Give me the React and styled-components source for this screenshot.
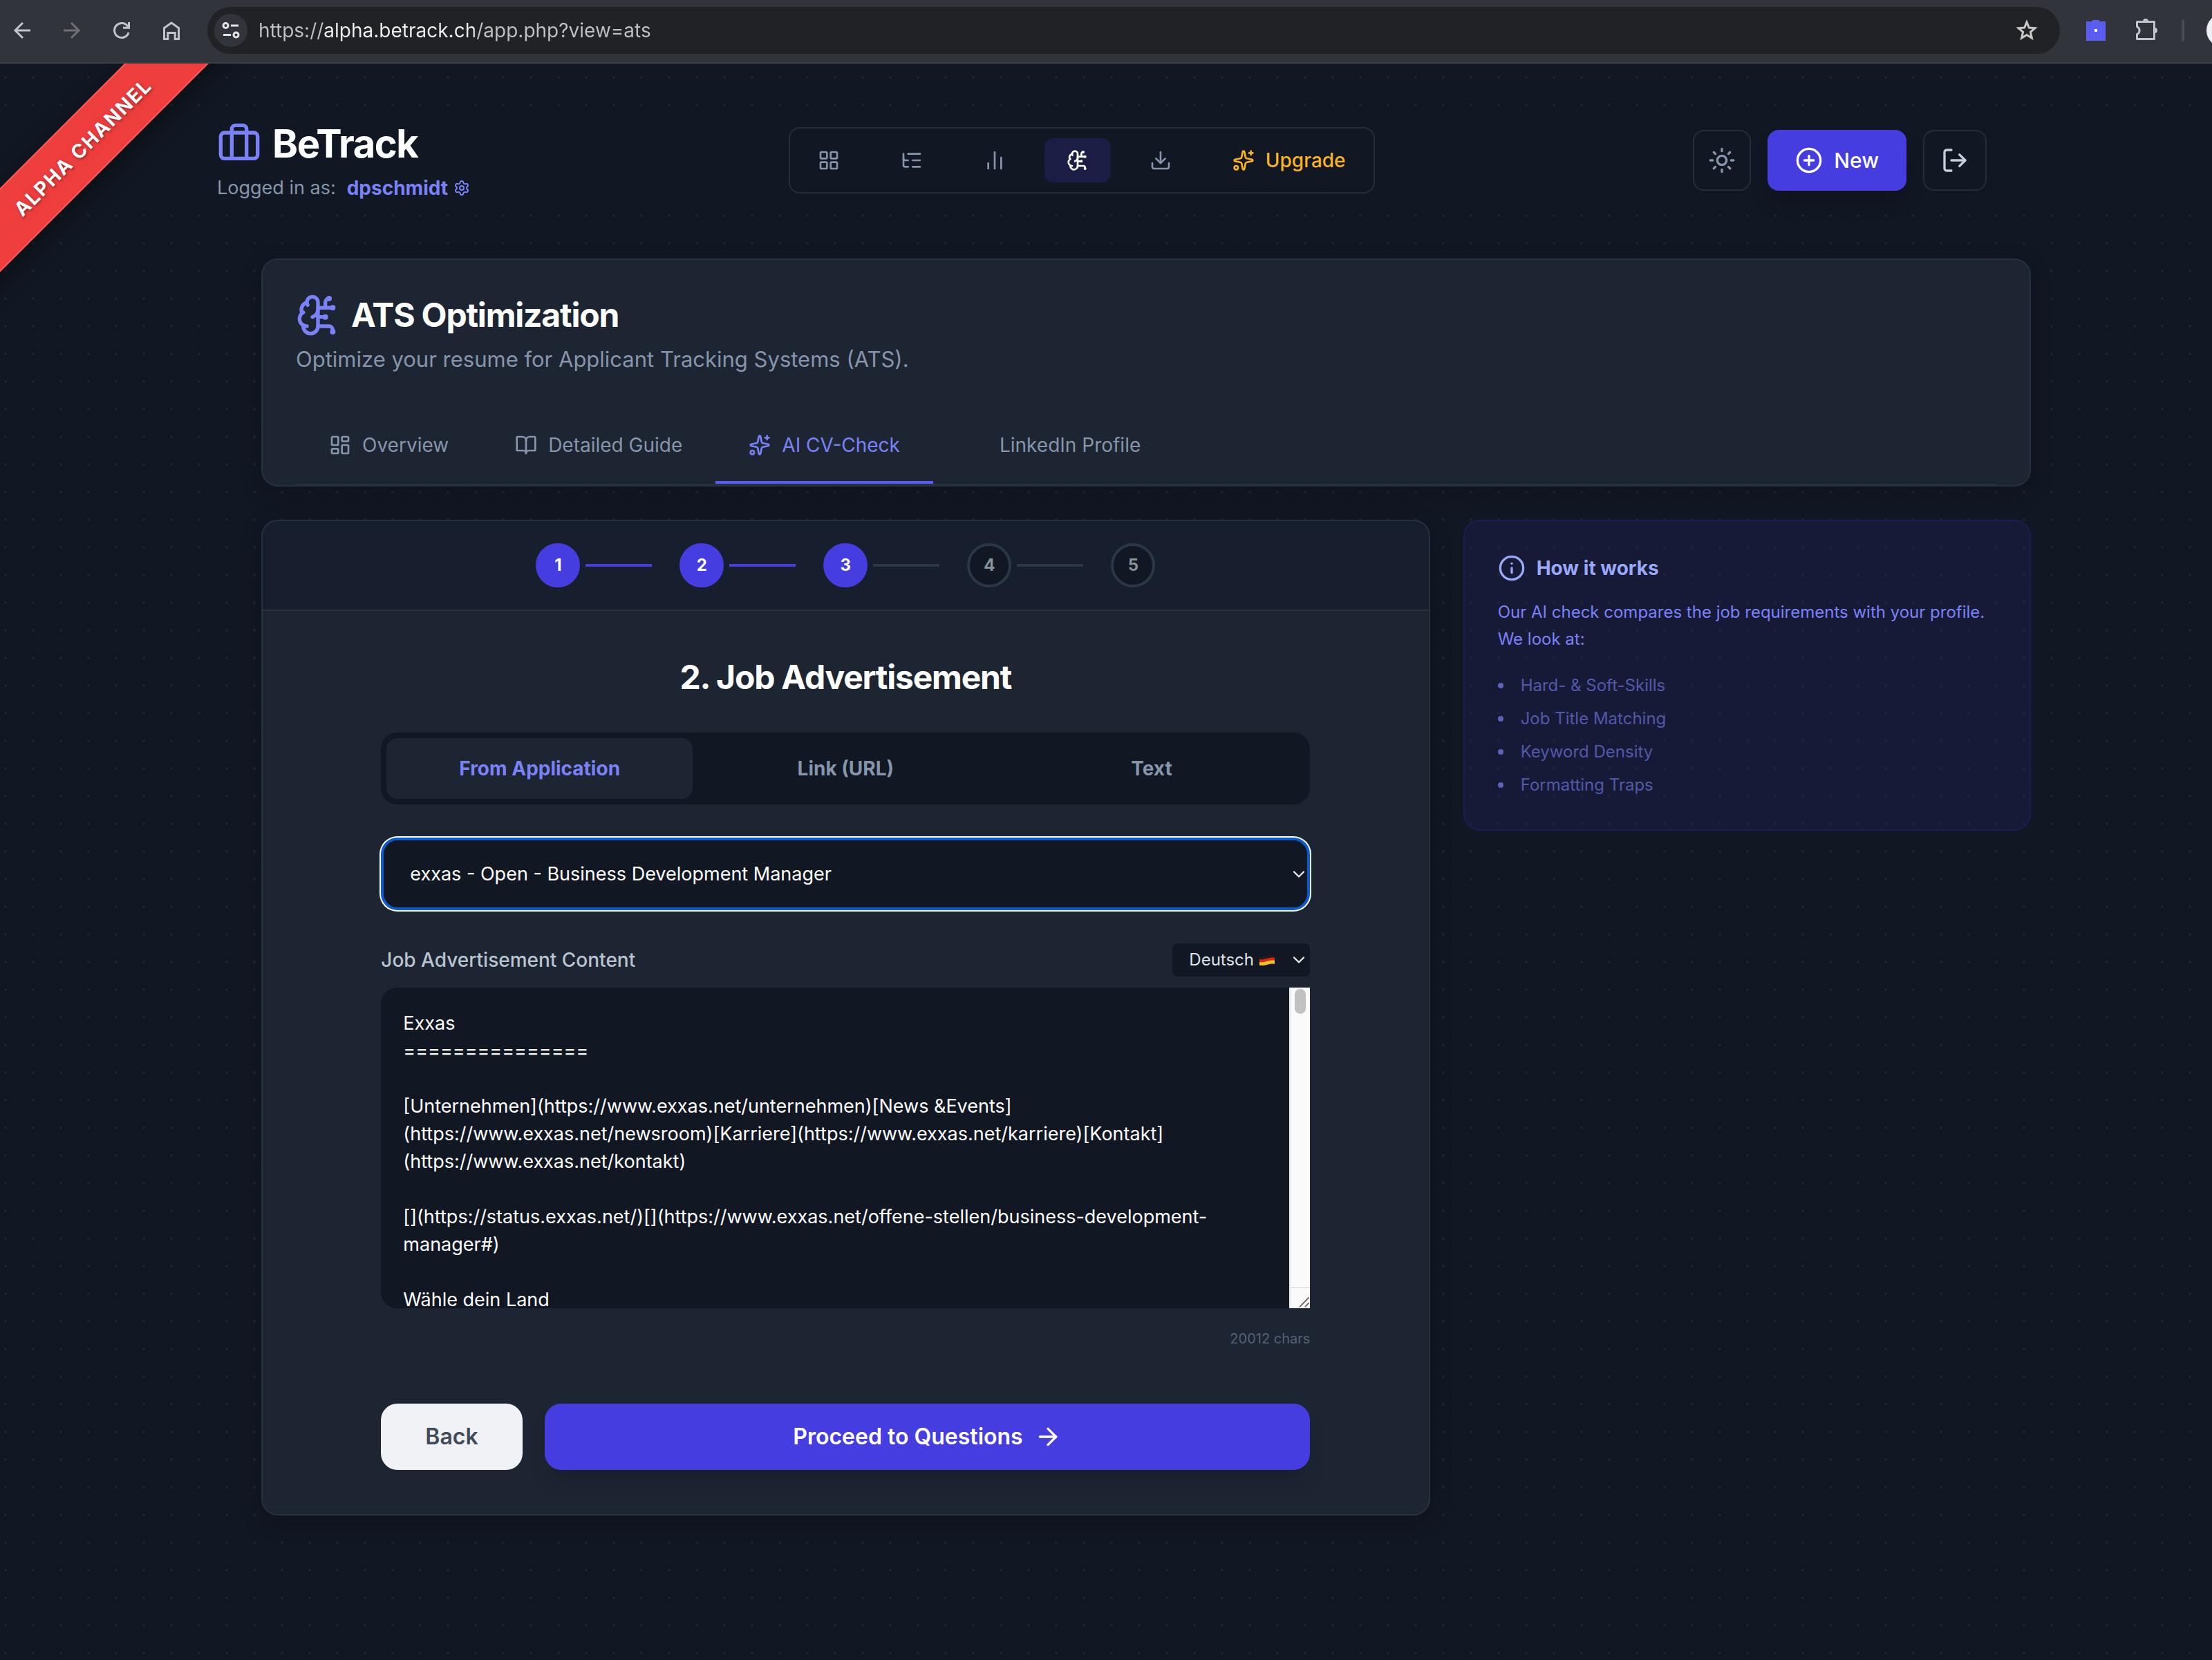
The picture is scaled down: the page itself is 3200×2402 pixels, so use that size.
import React, { useState } from "react";
import styled, { createGlobalStyle } from "styled-components";
import {
  ArrowRight,
  BookOpen,
  BrainCircuit,
  Briefcase,
  ChartNoAxesColumn,
  ChevronDown,
  CirclePlus,
  Download,
  Info,
  LayoutDashboard,
  LayoutGrid,
  ListTree,
  LogOut,
  Settings,
  Sparkles,
  Sun,
} from "lucide-react";

const GlobalStyle = createGlobalStyle`
  *,
  *::before,
  *::after {
    box-sizing: border-box;
  }

  body {
    margin: 0;
    background: #111723;
    font-family: Inter, "Liberation Sans", sans-serif;
    font-size: 28px;
    line-height: 40px;
    color: #ffffff;
  }

  button,
  input,
  select,
  textarea {
    font-family: inherit;
    font-size: inherit;
    line-height: inherit;
    color: inherit;
    margin: 0;
  }

  button {
    cursor: pointer;
  }

  h1, h2, h3, p, ul {
    margin: 0;
  }
`;

/* ---------- browser bar ---------- */

const BrowserBar = styled.div`
  display: flex;
  align-items: center;
  height: 92px;
  padding: 0 0 2px 8px;
  background: #32343b;
  border-bottom: 2px solid #3e3f44;
  overflow: hidden;
`;

const BrowserButton = styled.button`
  flex: none;
  display: flex;
  align-items: center;
  justify-content: center;
  width: 48px;
  height: 48px;
  margin-right: 24px;
  padding: 0;
  border: none;
  background: none;
  color: ${(props) => (props.$muted ? "#6f7074" : "#c0c3d0")};
`;

const AddressBar = styled.div`
  flex: 1;
  display: flex;
  align-items: center;
  height: 68px;
  margin-left: 4px;
  padding: 0 24px 0 10px;
  border-radius: 34px;
  background: #212226;
`;

const SiteInfo = styled.button`
  display: flex;
  align-items: center;
  justify-content: center;
  width: 48px;
  height: 48px;
  padding: 0;
  border: none;
  border-radius: 50%;
  background: #32343b;
  color: #e3e3e3;
`;

const AddressInput = styled.input`
  flex: 1;
  height: 40px;
  margin-left: 16px;
  padding: 0;
  border: none;
  outline: none;
  color: #c0c1c3;
  background: linear-gradient(to right, #c0c1c3 93px, #f0f0f0 93px, #f0f0f0 312px, #c0c1c3 312px);
  background-clip: text;
  -webkit-background-clip: text;
  -webkit-text-fill-color: transparent;
`;

const StarButton = styled(BrowserButton)`
  margin-right: 0;
  color: #c9c7c5;
`;

const Extensions = styled.div`
  flex: none;
  display: flex;
  align-items: center;
  width: 220px;
  padding-left: 28px;
`;

const BarSeparator = styled.span`
  flex: none;
  width: 4px;
  height: 32px;
  margin: 0 32px 0 4px;
  border-radius: 2px;
  background: #4a4c54;
`;

const Avatar = styled.span`
  flex: none;
  width: 48px;
  height: 48px;
  border-radius: 50%;
  background: #eff0f4;
`;

/* ---------- page ---------- */

const Page = styled.div`
  position: relative;
  min-height: calc(100vh - 92px);
  padding: 64px 0 128px;
  overflow: hidden;
  background-color: #111723;
  background-image: radial-gradient(circle, #1f2733 2px, transparent 2px);
  background-size: 40px 40px;
  background-position: -12px 0;
`;

const Ribbon = styled.div`
  position: absolute;
  top: 78px;
  left: -130px;
  display: flex;
  align-items: center;
  justify-content: center;
  width: 500px;
  height: 86px;
  transform: rotate(-45deg);
  background: #ed3d3d;
  border: 2px solid #f25c5c;
  box-shadow: 0 8px 30px rgba(0, 0, 0, 0.45);
  font-weight: 700;
  letter-spacing: 2px;
  text-shadow: 0 2px 4px rgba(0, 0, 0, 0.4);
`;

const Header = styled.header`
  display: flex;
  align-items: center;
  justify-content: space-between;
  padding: 16px 326px 16px 314px;
  background: #111723;
`;

const Brand = styled.div`
  display: flex;
  flex-direction: column;
  gap: 8px;
`;

const BrandName = styled.h1`
  display: flex;
  align-items: center;
  gap: 16px;
  font-size: 56px;
  line-height: 72px;
  font-weight: 700;
  letter-spacing: -0.025em;

  svg {
    color: #7a82f8;
  }
`;

const UserLine = styled.div`
  display: flex;
  align-items: center;
  gap: 16px;
  font-size: 27px;
  color: #8695ab;
`;

const UserLink = styled.a`
  display: flex;
  align-items: center;
  gap: 8px;
  color: #7a82f8;
  font-size: 28px;
  font-weight: 700;
  text-decoration: none;
`;

const MainNav = styled.nav`
  display: flex;
  gap: 24px;
  padding: 14px 8px;
  border: 2px solid #262d39;
  border-radius: 16px;
`;

const NavButton = styled.button`
  display: flex;
  align-items: center;
  gap: 16px;
  height: 64px;
  padding: 0 32px;
  border: none;
  border-radius: 12px;
  font-weight: 500;
  background: ${(props) => (props.$active ? "#1c1d45" : "none")};
  color: ${(props) => (props.$active ? "#ffffff" : props.$gold ? "#fbb324" : "#8695ab")};
`;

const Actions = styled.div`
  display: flex;
  gap: 24px;
`;

const OutlineButton = styled.button`
  display: flex;
  align-items: center;
  height: 88px;
  padding: 0 ${(props) => props.$pad};
  border: 2px solid #262d39;
  border-radius: 16px;
  background: none;
  color: ${(props) => props.$color};
`;

const NewButton = styled.button`
  display: flex;
  align-items: center;
  gap: 16px;
  height: 88px;
  padding: 0 40px;
  border: none;
  border-radius: 16px;
  background: #463de0;
  box-shadow: 0 20px 30px -6px rgba(0, 0, 0, 0.2);
  font-size: 30px;
  font-weight: 500;
`;

const Main = styled.main`
  display: flex;
  flex-direction: column;
  gap: 48px;
  padding: 66px 262px 0 378px;
`;

const Card = styled.section`
  border: 2px solid #27303d;
  border-radius: 24px;
  background: #1d2533;
  box-shadow: 0 8px 32px rgba(0, 0, 0, 0.2);
  overflow: hidden;
`;

const IntroCard = styled(Card)`
  padding: 48px 48px 0;
`;

const IntroTitle = styled.h2`
  display: flex;
  align-items: center;
  gap: 16px;
  font-size: 48px;
  line-height: 64px;
  font-weight: 700;
  letter-spacing: -0.025em;

  svg {
    color: #7a82f8;
  }
`;

const IntroText = styled.p`
  margin-top: 8px;
  font-size: 31px;
  line-height: 48px;
  color: #8695ab;
`;

const Tabs = styled.div`
  display: flex;
  margin-top: 48px;
  border-bottom: 2px solid #27303d;
`;

const Tab = styled.button`
  display: flex;
  align-items: center;
  gap: 16px;
  padding: 32px 48px;
  border: none;
  border-bottom: 4px solid ${(props) => (props.$active ? "#585cf0" : "transparent")};
  background: none;
  font-weight: 400;
  color: ${(props) => (props.$active ? "#7a82f8" : "#8695ab")};
`;

const TabIcon = styled.span`
  display: flex;
  width: 32px;
  height: 32px;
`;

const Columns = styled.div`
  display: grid;
  grid-template-columns: repeat(3, 1fr);
  align-items: start;
  gap: 48px;
`;

const WizardCard = styled(Card)`
  grid-column: span 2;
`;

const Stepper = styled.div`
  display: flex;
  align-items: center;
  justify-content: center;
  padding: 32px;
  border-bottom: 2px solid #2a3240;
  background: #171e2d;
`;

const StepDot = styled.span`
  display: flex;
  align-items: center;
  justify-content: center;
  width: 64px;
  height: 64px;
  border-radius: 50%;
  border: 4px solid ${(props) => (props.$done ? "#463de0" : "#2b3647")};
  background: ${(props) => (props.$done ? "#463de0" : "#111723")};
  color: ${(props) => (props.$done ? "#ffffff" : "#8a919d")};
  font-size: 24px;
  font-weight: 700;
`;

const StepLine = styled.span`
  width: 96px;
  height: 4px;
  margin: 0 40px 0 8px;
  background: ${(props) => (props.$done ? "#463de0" : "#2b3647")};
`;

const WizardBody = styled.div`
  max-width: 1472px;
  margin: 0 auto;
  padding: 64px;
`;

const StepTitle = styled.h3`
  font-size: 48px;
  line-height: 64px;
  font-weight: 700;
  letter-spacing: -0.025em;
  text-align: center;
`;

const Segments = styled.div`
  display: flex;
  margin: 48px 0;
  padding: 8px;
  border-radius: 24px;
  background: #111723;
`;

const Segment = styled.button`
  flex: 1;
  height: 88px;
  border: none;
  border-radius: 16px;
  background: ${(props) => (props.$active ? "#1d2533" : "none")};
  color: ${(props) => (props.$active ? "#7a82f8" : "#8695ab")};
  font-weight: 700;
`;

const SelectBox = styled.div`
  position: relative;
  display: flex;
`;

const SelectArrow = styled(ChevronDown)`
  position: absolute;
  top: calc(50% - 14px);
  right: 2px;
  pointer-events: none;
  color: #e8eaee;
`;

const JobSelect = styled.select`
  appearance: none;
  width: 100%;
  height: 105px;
  padding: 0 38px;
  border: 4px solid #0a5bcf;
  border-radius: 24px;
  outline: none;
  box-shadow: 0 0 0 2px #ffffff;
  background: #111723;
  font-size: 27px;
`;

const ContentHead = styled.div`
  display: flex;
  align-items: center;
  justify-content: space-between;
  margin: 48px 0 16px;
  color: #b9c4d1;
  font-weight: 500;
`;

const LanguageSelect = styled.select`
  appearance: none;
  width: 199px;
  height: 48px;
  padding: 0 24px;
  border: none;
  border-radius: 8px;
  background: #111723;
  color: #dfe3ea;
  font-size: 24px;
`;

const Flag = styled.svg`
  position: absolute;
  top: 16px;
  left: 126px;
  pointer-events: none;
`;

const Editor = styled.div`
  display: flex;
  height: 464px;
  border-radius: 24px 0 0 24px;
  background: #111723;
  overflow: hidden;
`;

const EditorText = styled.textarea`
  flex: 1;
  padding: 32px;
  border: none;
  outline: none;
  resize: none;
  overflow: hidden;
  background: none;
  font-size: 27px;
`;

const ScrollTrack = styled.div`
  display: flex;
  flex-direction: column;
  align-items: center;
  justify-content: space-between;
  width: 30px;
  padding-top: 2px;
  border-left: 2px solid #e8e8e8;
  background: #fafafa;
`;

const ScrollThumb = styled.div`
  width: 16px;
  height: 36px;
  border-radius: 8px;
  background: #c1c1c1;
`;

const ResizeCorner = styled.svg`
  width: 100%;
  height: 30px;
  border-top: 1px solid #d0d0d0;
`;

const CharCount = styled.div`
  margin: 24px 0 74px;
  text-align: right;
  font-size: 20px;
  color: #526178;
`;

const ButtonRow = styled.div`
  display: flex;
  gap: 32px;
`;

const BackButton = styled.button`
  height: 96px;
  padding: 0 64px;
  border: none;
  border-radius: 24px;
  background: #f1f2f6;
  color: #414b59;
  font-size: 32px;
  font-weight: 600;
`;

const ProceedButton = styled.button`
  flex: 1;
  display: flex;
  align-items: center;
  justify-content: center;
  gap: 16px;
  height: 96px;
  border: none;
  border-radius: 24px;
  background: #463de0;
  box-shadow: 0 20px 30px -6px rgba(0, 0, 0, 0.15);
  color: #ffffff;
  font-size: 32px;
  font-weight: 600;
`;

const HelpCard = styled.aside`
  padding: 48px;
  border: 2px solid rgba(36, 36, 120, 0.4);
  border-radius: 24px;
  background: rgba(29, 29, 74, 0.5);
  font-size: 24px;
`;

const HelpTitle = styled.h3`
  display: flex;
  align-items: center;
  gap: 16px;
  color: #9aa8fa;
  font-size: 28px;
  font-weight: 700;
`;

const HelpText = styled.p`
  margin-top: 24px;
  line-height: 39px;
  color: #7a82f8;
`;

const HelpList = styled.ul`
  display: flex;
  flex-direction: column;
  gap: 16px;
  margin-top: 32px;
  padding: 0;
  list-style: none;
  line-height: 32px;
  color: #5159a8;
`;

const HelpItem = styled.li`
  display: flex;
  align-items: center;
  gap: 25px;

  &::before {
    content: "";
    width: 8px;
    height: 8px;
    border-radius: 50%;
    background: #5a62b8;
  }
`;

const BackIcon = () => (
  <svg width="32" height="32" viewBox="0 0 32 32" fill="none" stroke="currentColor" strokeWidth="3">
    <path d="M28 16H6.500M17 5 6 16l11 11" />
  </svg>
);

const ForwardIcon = () => (
  <svg width="32" height="32" viewBox="0 0 32 32" fill="none" stroke="currentColor" strokeWidth="3">
    <path d="M4 16h21.500M15 5l11 11-11 11" />
  </svg>
);

const ReloadIcon = () => (
  <svg width="32" height="32" viewBox="0 0 32 32" fill="none" stroke="currentColor" strokeWidth="3">
    <path d="M26.100 19A10.500 10.500 0 1 1 25 10.500" />
    <path d="M26.500 4v8.200H18" />
  </svg>
);

const HomeIcon = () => (
  <svg width="32" height="32" viewBox="0 0 32 32" fill="none" stroke="currentColor" strokeWidth="3">
    <path d="M5.500 12.500 16 5l10.500 7.500v16h-5.300v-9H10.800v9H5.500z" />
  </svg>
);

const TuneIcon = () => (
  <svg width="28" height="28" viewBox="0 0 28 28" fill="none" stroke="currentColor" strokeWidth="3">
    <circle cx="6.500" cy="7" r="3.500" />
    <path d="M14 7h11M3 20.500h11" />
    <circle cx="21.500" cy="20.500" r="3.500" />
  </svg>
);

const StarIcon = () => (
  <svg width="36" height="36" viewBox="0 0 36 36" fill="none" stroke="currentColor" strokeWidth="3">
    <path d="m18 6 3.300 8 8.700.7-6.600 5.700 2 8.600-7.400-4.600-7.400 4.600 2-8.600L6 14.700l8.700-.7z" />
  </svg>
);

const PuzzleIcon = () => (
  <svg width="36" height="36" viewBox="0 0 36 36">
    <path
      d="M5.500 5.500h25v25h-25v-7a6 6 0 0 0 0-11z"
      fill="none"
      stroke="currentColor"
      strokeWidth="3"
      strokeLinejoin="round"
    />
    <path d="M14 5a4 4 0 0 1 8 0zM31 14a4 4 0 0 1 0 8z" fill="currentColor" />
  </svg>
);

const ExtensionIcon = () => (
  <svg width="28" height="30" viewBox="0 0 28 30">
    <path d="M0 2h9V0h10v2h9v28H0z" fill="#5b5cf0" />
    <path d="M12 13h4v4h-4z" fill="#ffffff" />
  </svg>
);

const GermanFlag = () => (
  <Flag width="22" height="16" viewBox="0 0 22 16" aria-hidden="true">
    <path d="M0 3C7 5 14-1 22 1v5C14 4 7 10 0 8z" fill="#1c1c1c" />
    <path d="M0 7C7 9 14 3 22 5v5C14 8 7 14 0 12z" fill="#e0241b" />
    <path d="M0 11C7 13 14 7 22 9v5C14 12 7 18 0 16z" fill="#f6c51c" />
  </Flag>
);

const navItems = [
  { label: "Dashboard", Icon: LayoutGrid },
  { label: "Applications", Icon: ListTree },
  { label: "Statistics", Icon: ChartNoAxesColumn },
  { label: "ATS", Icon: BrainCircuit, active: true },
  { label: "Export", Icon: Download },
];

const tabs = [
  { label: "Overview", Icon: LayoutDashboard },
  { label: "Detailed Guide", Icon: BookOpen },
  { label: "AI CV-Check", Icon: Sparkles },
  { label: "LinkedIn Profile" },
];

const sources = ["From Application", "Link (URL)", "Text"];

const checks = ["Hard- & Soft-Skills", "Job Title Matching", "Keyword Density", "Formatting Traps"];

const advertisement = `Exxas
===============

[Unternehmen](https://www.exxas.net/unternehmen)[News &Events](https://www.exxas.net/newsroom)[Karriere](https://www.exxas.net/karriere)[Kontakt](https://www.exxas.net/kontakt)

[](https://status.exxas.net/)[](https://www.exxas.net/offene-stellen/business-development-manager#)

Wähle dein Land`;

const Browser = () => (
  <BrowserBar>
    <BrowserButton aria-label="Back">
      <BackIcon />
    </BrowserButton>
    <BrowserButton $muted aria-label="Forward">
      <ForwardIcon />
    </BrowserButton>
    <BrowserButton aria-label="Reload">
      <ReloadIcon />
    </BrowserButton>
    <BrowserButton aria-label="Home">
      <HomeIcon />
    </BrowserButton>
    <AddressBar>
      <SiteInfo aria-label="Site information">
        <TuneIcon />
      </SiteInfo>
      <AddressInput
        type="text"
        aria-label="Address"
        defaultValue="https://alpha.betrack.ch/app.php?view=ats"
      />
      <StarButton aria-label="Bookmark">
        <StarIcon />
      </StarButton>
    </AddressBar>
    <Extensions>
      <BrowserButton aria-label="Extension">
        <ExtensionIcon />
      </BrowserButton>
      <BrowserButton aria-label="Extensions">
        <PuzzleIcon />
      </BrowserButton>
      <BarSeparator />
      <Avatar />
    </Extensions>
  </BrowserBar>
);

const App = () => {
  const [tab, setTab] = useState("AI CV-Check");
  const [source, setSource] = useState("From Application");
  const step = 3;

  return (
    <>
      <GlobalStyle />
      <Browser />
      <Page>
        <Header>
          <Brand>
            <BrandName>
              <Briefcase size={64} />
              BeTrack
            </BrandName>
            <UserLine>
              Logged in as:
              <UserLink href="#profile">
                dpschmidt
                <Settings size={24} />
              </UserLink>
            </UserLine>
          </Brand>
          <MainNav>
            {navItems.map(({ label, Icon, active }) => (
              <NavButton key={label} $active={active} aria-label={label}>
                <Icon size={32} />
              </NavButton>
            ))}
            <NavButton $gold>
              <Sparkles size={32} />
              Upgrade
            </NavButton>
          </MainNav>
          <Actions>
            <OutlineButton $pad="20px" $color="#8695ab" aria-label="Theme">
              <Sun size={40} />
            </OutlineButton>
            <NewButton>
              <CirclePlus size={40} />
              New
            </NewButton>
            <OutlineButton $pad="24px" $color="#c6d0dd" aria-label="Log out">
              <LogOut size={40} />
            </OutlineButton>
          </Actions>
        </Header>

        <Main>
          <IntroCard>
            <IntroTitle>
              <BrainCircuit size={64} />
              ATS Optimization
            </IntroTitle>
            <IntroText>Optimize your resume for Applicant Tracking Systems (ATS).</IntroText>
            <Tabs>
              {tabs.map(({ label, Icon }) => (
                <Tab key={label} $active={tab === label} onClick={() => setTab(label)}>
                  <TabIcon>{Icon && <Icon size={32} />}</TabIcon>
                  {label}
                </Tab>
              ))}
            </Tabs>
          </IntroCard>

          <Columns>
            <WizardCard>
              <Stepper>
                {[1, 2, 3, 4, 5].map((n) => (
                  <React.Fragment key={n}>
                    <StepDot $done={n <= step}>{n}</StepDot>
                    {n < 5 && <StepLine $done={n < step} />}
                  </React.Fragment>
                ))}
              </Stepper>
              <WizardBody>
                <StepTitle>2. Job Advertisement</StepTitle>
                <Segments>
                  {sources.map((name) => (
                    <Segment key={name} $active={source === name} onClick={() => setSource(name)}>
                      {name}
                    </Segment>
                  ))}
                </Segments>
                <SelectBox>
                  <JobSelect aria-label="Application">
                    <option>exxas - Open - Business Development Manager</option>
                  </JobSelect>
                  <SelectArrow size={28} />
                </SelectBox>
                <ContentHead>
                  <label htmlFor="content">Job Advertisement Content</label>
                  <SelectBox>
                    <LanguageSelect aria-label="Language">
                      <option>Deutsch</option>
                    </LanguageSelect>
                    <GermanFlag />
                    <SelectArrow size={28} />
                  </SelectBox>
                </ContentHead>
                <Editor>
                  <EditorText id="content" defaultValue={advertisement} spellCheck={false} />
                  <ScrollTrack>
                    <ScrollThumb />
                    <ResizeCorner viewBox="0 0 28 30" fill="none" stroke="#6b6b6b" strokeWidth="2">
                      <path d="M13 28 27 14M21 28l6-6" />
                    </ResizeCorner>
                  </ScrollTrack>
                </Editor>
                <CharCount>20012 chars</CharCount>
                <ButtonRow>
                  <BackButton>Back</BackButton>
                  <ProceedButton>
                    Proceed to Questions
                    <ArrowRight size={40} />
                  </ProceedButton>
                </ButtonRow>
              </WizardBody>
            </WizardCard>

            <HelpCard>
              <HelpTitle>
                <Info size={40} />
                How it works
              </HelpTitle>
              <HelpText>
                Our AI check compares the job requirements with your profile. We look at:
              </HelpText>
              <HelpList>
                {checks.map((item) => (
                  <HelpItem key={item}>{item}</HelpItem>
                ))}
              </HelpList>
            </HelpCard>
          </Columns>
        </Main>
        <Ribbon>ALPHA CHANNEL</Ribbon>
      </Page>
    </>
  );
};

export default App;
